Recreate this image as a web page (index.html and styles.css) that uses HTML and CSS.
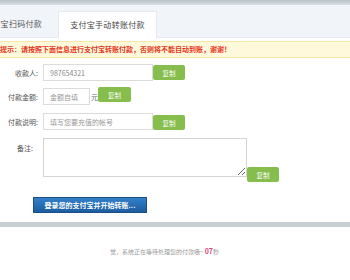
FILE: index.html
```html
<!DOCTYPE html>
<html lang="zh">
<head>
<meta charset="utf-8">
<link rel="stylesheet" href="styles.css">
</head>
<body>
<div class="topbar"></div>
<div class="tabs">
  <div class="tab">支付宝扫码付款</div>
  <div class="tab active">支付宝手动转账付款</div>
</div>
<div class="notice">提示：请按照下面信息进行支付宝转账付款，否则将不能自动到账，谢谢！</div>
<div class="form">
  <div class="row r1">
    <label class="lbl">收款人:</label>
    <input class="inp wide" value="987654321">
    <button class="copy">复制</button>
  </div>
  <div class="row r2">
    <label class="lbl">付款金额:</label>
    <input class="inp narrow" placeholder="金额自填">
    <span class="unit">元</span>
    <button class="copy up">复制</button>
  </div>
  <div class="row r3">
    <label class="lbl">付款说明:</label>
    <input class="inp wide" placeholder="填写您要充值的帐号">
    <button class="copy low">复制</button>
  </div>
  <div class="row r4">
    <label class="lbl top">备注:</label>
    <textarea class="memo"></textarea>
    <button class="copy down">复制</button>
  </div>
  <button class="login">登录您的支付宝并开始转账...</button>
</div>
<div class="bar"></div>
<p class="footer">觉，系统正在等待处理您的付款哦~ <b class="sec">07</b>秒</p>
</body>
</html>
```

FILE: styles.css
```css
html, body {
  margin: 0;
  padding: 0;
  background: #ffffff;
  width: 350px;
  height: 280px;
  overflow: hidden;
  font-family: "Noto Sans CJK SC", "Noto Sans", sans-serif;
}
.topbar {
  height: 5px;
  background: linear-gradient(#b9c2c8, #d9dee2);
}
.tabs {
  display: flex;
  align-items: flex-end;
  height: 33px;
  background: #f1f4f9;
  border-bottom: 1px solid #e6e9ee;
  box-sizing: border-box;
  margin-left: -16px;
}
.tab {
  font-size: 8px;
  color: #555;
  height: 26px;
  line-height: 26px;
  box-sizing: border-box;
  width: 74px;
  letter-spacing: 0.3px;
}
.tab.active {
  background: #ffffff;
  width: 99px;
  text-align: center;
  color: #444;
  border: 1px solid #e6e9ee;
  border-bottom: none;
  margin-bottom: -1px;
  height: 27px;
  line-height: 26px;
}
.notice {
  margin-top: 3px;
  height: 17px;
  box-sizing: border-box;
  background: #fff9dc;
  border-top: 1px solid #f6e7a6;
  border-bottom: 1px solid #f6e7a6;
  color: #e5361d;
  font-weight: bold;
  font-size: 7px;
  line-height: 15px;
  white-space: nowrap;
  overflow: hidden;
}
.form {
  display: flex;
  flex-direction: column;
}
.row {
  display: flex;
  align-items: center;
  height: 17px;
}
.r1 { margin-top: 6px; }
.r2 { margin-top: 7px; }
.r3 { margin-top: 8px; }
.r4 { margin-top: 8px; height: 39px; align-items: flex-start; }
.lbl {
  width: 38px;
  text-align: right;
  margin-right: 5px;
  font-size: 7px;
  color: #555;
  white-space: nowrap;
}
.lbl.top { margin-top: 5px; width: 33px; margin-right: 10px; }
.inp {
  height: 17px;
  box-sizing: border-box;
  border: 1px solid #dcdcdc;
  padding: 0 0 0 6px;
  margin: 0;
  font-family: inherit;
  font-size: 7px;
  color: #888;
  outline: none;
}
.inp::placeholder { color: #999; }
.wide { width: 110px; }
.narrow { width: 47px; }
.unit {
  font-size: 7px;
  color: #666;
  width: 7px;
  margin-left: 1px;
}
.copy {
  height: 15px;
  width: 32px;
  padding: 0;
  border: none;
  border-radius: 2px;
  background: #86bd4c;
  color: #fff;
  font-family: inherit;
  font-size: 6.5px;
}
.copy.up { align-self: flex-start; margin-top: -1px; width: 33px; }
.copy.low { margin-top: 2px; }
.memo {
  width: 204px;
  height: 39px;
  box-sizing: border-box;
  margin: 0;
  border: 1px solid #d4d4d4;
  padding: 0;
  outline: none;
}
.copy.down { align-self: flex-end; margin-bottom: -5px; }
.login {
  margin: 20px 0 0 33px;
  width: 114px;
  height: 16px;
  padding: 0;
  border: 1px solid #1b4e86;
  background: linear-gradient(#3380c8, #1b5d9f);
  color: #fff;
  font-family: inherit;
  font-weight: bold;
  font-size: 7px;
  align-self: flex-start;
}
.bar {
  margin-top: 9px;
  height: 5px;
  background: #c9d0d4;
}
.footer {
  margin: 20px 0 0 110px;
  font-size: 6px;
  color: #999;
  line-height: 8px;
}
.sec {
  color: #e0457a;
  font-size: 7px;
}
```
